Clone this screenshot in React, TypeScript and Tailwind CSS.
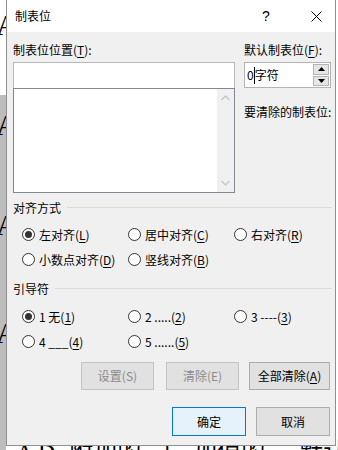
import React from 'react';

const FONT = { fontFamily: '"Noto Sans CJK SC", "Microsoft YaHei", sans-serif' };

// Label with an underlined access key, e.g. 左对齐(L)
const Key = ({ text, k }: { text: string; k: string }) => (
  <span className="whitespace-nowrap">
    {text}(<u className="underline-offset-2">{k}</u>)
  </span>
);

const Radio = ({ checked, children }: { checked?: boolean; children: React.ReactNode }) => (
  <div className="flex items-center h-[25px]">
    <span className="w-[13px] h-[13px] rounded-full border border-[#333] bg-white flex items-center justify-center shrink-0">
      {checked && <span className="w-[7px] h-[7px] rounded-full bg-[#333]" />}
    </span>
    <span className="ml-[4px] text-[12px] leading-[16px] text-black">{children}</span>
  </div>
);

const GroupTitle = ({ title }: { title: string }) => (
  <div className="flex items-center h-[16px]">
    <span className="text-[12px] leading-[16px] text-black whitespace-nowrap">{title}</span>
    <div className="flex-1 h-px bg-[#dcdcdc] ml-[6px] -mt-[2px]" />
  </div>
);

const Btn = ({ children, w, disabled, primary }: { children: React.ReactNode; w: string; disabled?: boolean; primary?: boolean }) => (
  <div
    className={`${w} flex items-center justify-center border text-[12px] leading-[16px] ${
      primary
        ? 'bg-[#e5f1fb] border-[#0078d7] text-black'
        : disabled
        ? 'bg-[#e1e1e1] border-[#c4c4c4] text-[#8a8a8a]'
        : 'bg-[#e1e1e1] border-[#adadad] text-black'
    }`}
  >
    {children}
  </div>
);

export default function App() {
  return (
    <div className="relative w-[338px] h-[450px] overflow-hidden bg-white" style={FONT}>
      {/* document behind the dialog */}
      <div className="absolute left-0 top-[95px] w-[6px] h-[355px] bg-[#bdbdbd]" />
      <div className="absolute -left-[4px] top-[10px] text-[30px] leading-[30px] text-black" style={{ fontFamily: '"Liberation Serif", serif' }}>A</div>
      <div className="absolute -left-[4px] top-[110px] text-[30px] leading-[30px] text-black" style={{ fontFamily: '"Liberation Serif", serif' }}>A</div>
      <div className="absolute -left-[4px] top-[210px] text-[30px] leading-[30px] text-black" style={{ fontFamily: '"Liberation Serif", serif' }}>A</div>
      <div className="absolute -left-[4px] top-[318px] text-[30px] leading-[30px] text-black" style={{ fontFamily: '"Liberation Serif", serif' }}>A</div>
      <div className="absolute left-0 top-[440px] flex gap-[14px] text-[24px] leading-[24px] text-black whitespace-nowrap" style={{ fontFamily: '"Liberation Serif", "Noto Sans CJK SC", serif' }}>
        <span className="ml-[16px]">A D</span>
        <span>附加的</span>
        <span>主</span>
        <span>加值的</span>
        <span className="ml-[20px]">默认</span>
      </div>

      {/* dialog window */}
      <div className="absolute left-[6px] top-0 w-[330px] h-[446px] border-x border-b border-[#8f8f8f] bg-[#f0f0f0] flex flex-col">
        {/* title bar */}
        <div className="h-[32px] bg-white flex items-center shrink-0">
          <span className="pl-[8px] text-[12px] leading-[16px] text-black">制表位</span>
          <div className="ml-auto flex items-center h-full">
            <div className="w-[62px] h-full flex items-center justify-center text-[14px] text-black" style={{ fontFamily: '"Liberation Sans", sans-serif' }}>?</div>
            <div className="w-[38px] h-full flex items-center justify-center">
              <svg width="11" height="11" viewBox="0 0 11 11">
                <path d="M0.5 0.5 L10.5 10.5 M10.5 0.5 L0.5 10.5" stroke="#000" strokeWidth="1" />
              </svg>
            </div>
          </div>
        </div>

        {/* body */}
        <div className="flex-1 pl-[6px] pr-[3px] pt-[10px] text-[12px] leading-[16px] text-black">
          <div className="flex">
            {/* tab stop positions */}
            <div className="w-[222px]">
              <Key text="制表位位置" k="T" />:
              <div className="mt-[4px] h-[26px] bg-white border border-[#b9b9b9] border-b-0" />
              <div className="h-[105px] bg-white border border-[#828790] flex">
                <div className="flex-1" />
                <div className="w-[17px] bg-[#f0f0f0] flex flex-col items-center justify-between py-[6px]">
                  <svg width="9" height="6" viewBox="0 0 9 6">
                    <path d="M0.5 5 L4.5 1 L8.5 5" fill="none" stroke="#c2c2c2" strokeWidth="1.2" />
                  </svg>
                  <svg width="9" height="6" viewBox="0 0 9 6">
                    <path d="M0.5 1 L4.5 5 L8.5 1" fill="none" stroke="#c2c2c2" strokeWidth="1.2" />
                  </svg>
                </div>
              </div>
            </div>

            {/* default tab stops */}
            <div className="ml-[9px] w-[87px]">
              <Key text="默认制表位" k="F" />:
              <div className="mt-[4px] h-[26px] bg-white border border-[#b4b4b4] flex items-center">
                <div className="flex-1 flex items-center pl-[2px]">
                  <span>0</span>
                  <span className="w-px h-[17px] bg-black" />
                  <span>字符</span>
                </div>
                <div className="w-[16px] h-full flex flex-col gap-px py-px mr-px">
                  <div className="flex-1 bg-[#e6e6e6] border border-[#b4b4b4] flex items-center justify-center">
                    <svg width="7" height="4" viewBox="0 0 7 4"><path d="M0 4 L3.5 0 L7 4 Z" fill="#000" /></svg>
                  </div>
                  <div className="flex-1 bg-[#e6e6e6] border border-[#b4b4b4] flex items-center justify-center">
                    <svg width="7" height="4" viewBox="0 0 7 4"><path d="M0 0 L3.5 4 L7 0 Z" fill="#000" /></svg>
                  </div>
                </div>
              </div>
              <div className="mt-[16px] whitespace-nowrap">要清除的制表位:</div>
            </div>
          </div>

          {/* alignment */}
          <div className="mt-[7px]">
            <GroupTitle title="对齐方式" />
            <div className="mt-[6px] pl-[9px] grid grid-cols-[106px_106px_1fr]">
              <Radio checked><Key text="左对齐" k="L" /></Radio>
              <Radio><Key text="居中对齐" k="C" /></Radio>
              <Radio><Key text="右对齐" k="R" /></Radio>
              <Radio><Key text="小数点对齐" k="D" /></Radio>
              <Radio><Key text="竖线对齐" k="B" /></Radio>
            </div>
          </div>

          {/* leader */}
          <div className="mt-[9px]">
            <GroupTitle title="引导符" />
            <div className="mt-[7px] pl-[9px] grid grid-cols-[106px_106px_1fr]">
              <Radio checked><Key text="1 无" k="1" /></Radio>
              <Radio><Key text="2 ....." k="2" /></Radio>
              <Radio><Key text="3 ----" k="3" /></Radio>
              <Radio><Key text="4 ___" k="4" /></Radio>
              <Radio><Key text="5 ......" k="5" /></Radio>
            </div>
          </div>

          {/* set / clear */}
          <div className="mt-[8px] flex h-[28px] pl-[68px]">
            <Btn w="w-[73px]" disabled>设置(S)</Btn>
            <div className="ml-[12px]"><Btn w="w-[73px] h-[28px]" disabled>清除(E)</Btn></div>
            <div className="ml-[10px]"><Btn w="w-[81px] h-[28px]"><Key text="全部清除" k="A" /></Btn></div>
          </div>

          {/* ok / cancel */}
          <div className="mt-[17px] flex h-[29px] pl-[159px]">
            <Btn w="w-[74px]" primary>确定</Btn>
            <div className="ml-[10px]"><Btn w="w-[74px] h-[29px]">取消</Btn></div>
          </div>
        </div>
      </div>
    </div>
  );
}
